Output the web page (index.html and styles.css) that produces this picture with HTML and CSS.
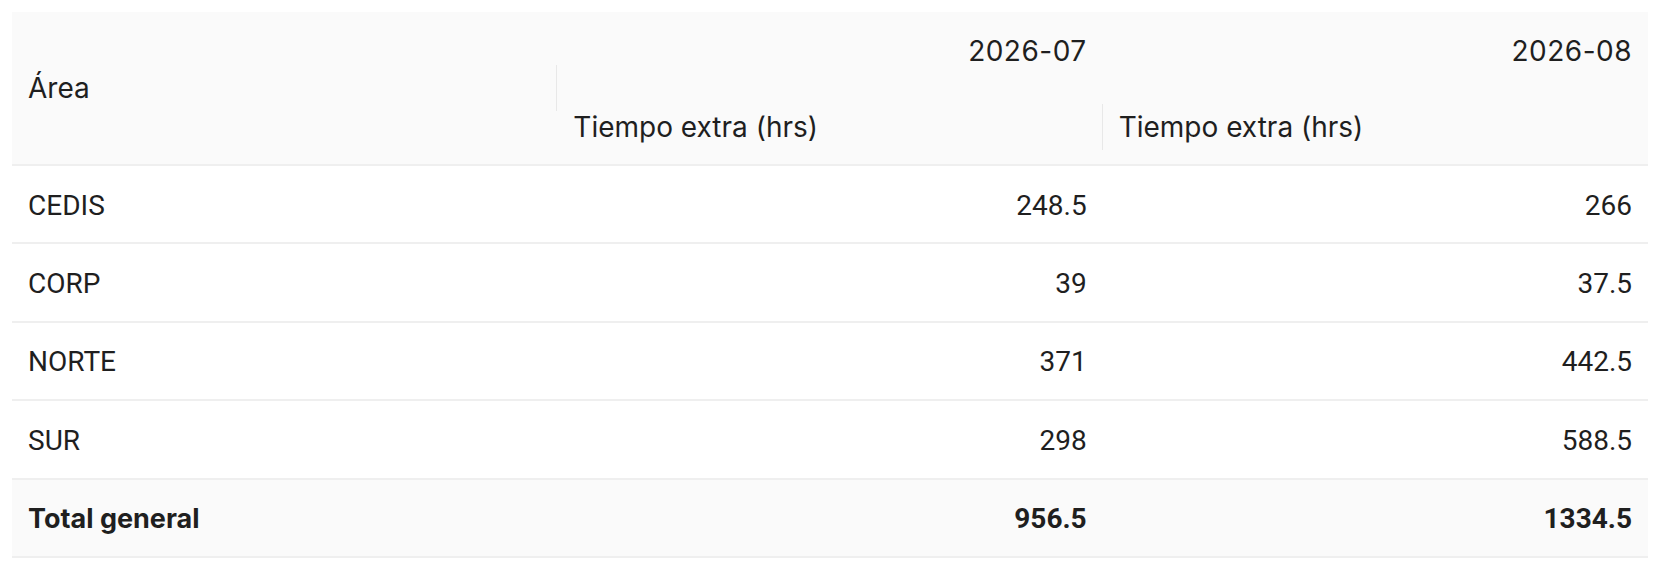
FILE: index.html
```html
<!DOCTYPE html>
<html lang="es">
<head>
<meta charset="utf-8">
<title>Tiempo extra por área</title>
<link rel="stylesheet" href="styles.css">
</head>
<body>
<div class="wrap">
<table class="pivot">
  <colgroup><col><col><col></colgroup>
  <thead>
    <tr class="h1">
      <th rowspan="2" class="left sep">Área</th>
      <th class="right period">2026-07</th>
      <th class="right period">2026-08</th>
    </tr>
    <tr class="h2">
      <th class="left sep">Tiempo extra (hrs)</th>
      <th class="left">Tiempo extra (hrs)</th>
    </tr>
  </thead>
  <tbody>
    <tr><td class="label">CEDIS</td><td class="num">248.5</td><td class="num">266</td></tr>
    <tr><td class="label">CORP</td><td class="num">39</td><td class="num">37.5</td></tr>
    <tr><td class="label">NORTE</td><td class="num">371</td><td class="num">442.5</td></tr>
    <tr><td class="label">SUR</td><td class="num">298</td><td class="num">588.5</td></tr>
    <tr class="total"><td class="label">Total general</td><td class="num">956.5</td><td class="num">1334.5</td></tr>
  </tbody>
</table>
</div>
</body>
</html>
```
FILE: styles.css
```css
html, body {
  margin: 0;
  padding: 0;
  background: #ffffff;
}
.wrap {
  padding: 12px;
}
.pivot {
  width: 100%;
  table-layout: fixed;
  border-collapse: separate;
  border-spacing: 0;
  color: #1f1f1f;
}
.pivot col {
  width: 33.333%;
}
.pivot th {
  background: #fafafa;
  font-family: Inter, "Noto Sans", sans-serif;
  font-size: 28px;
  font-weight: 400;
  line-height: 32px;
  padding: 0 16px;
  position: relative;
  vertical-align: middle;
}
.pivot th.left { text-align: left; }
.pivot th.right { text-align: right; }
.pivot th.period { letter-spacing: 0.5px; }
.pivot tr.h1 th { height: 78px; box-sizing: border-box; }
.pivot tr.h1 th[rowspan] { border-bottom: 2px solid #efefef; }
.pivot tr.h2 th {
  height: 76px;
  box-sizing: border-box;
  border-bottom: 2px solid #efefef;
}
.pivot th.sep::before {
  content: "";
  position: absolute;
  right: 0;
  top: 50%;
  width: 1px;
  height: 46px;
  transform: translateY(-50%);
  background: #e8e8e8;
}
.pivot td {
  font-family: Roboto, "Liberation Sans", sans-serif;
  font-size: 28px;
  line-height: 30px;
  height: 78.4px;
  box-sizing: border-box;
  padding: 3px 16px 0;
  border-bottom: 2px solid #efefef;
  vertical-align: middle;
}
.pivot td.label { text-align: left; }
.pivot td.num { text-align: right; }
.pivot tr.total td {
  background: #fafafa;
  font-weight: 700;
}
.pivot tr.total td.label {
  font-family: Inter, "Noto Sans", sans-serif;
  font-size: 27px;
}
```
